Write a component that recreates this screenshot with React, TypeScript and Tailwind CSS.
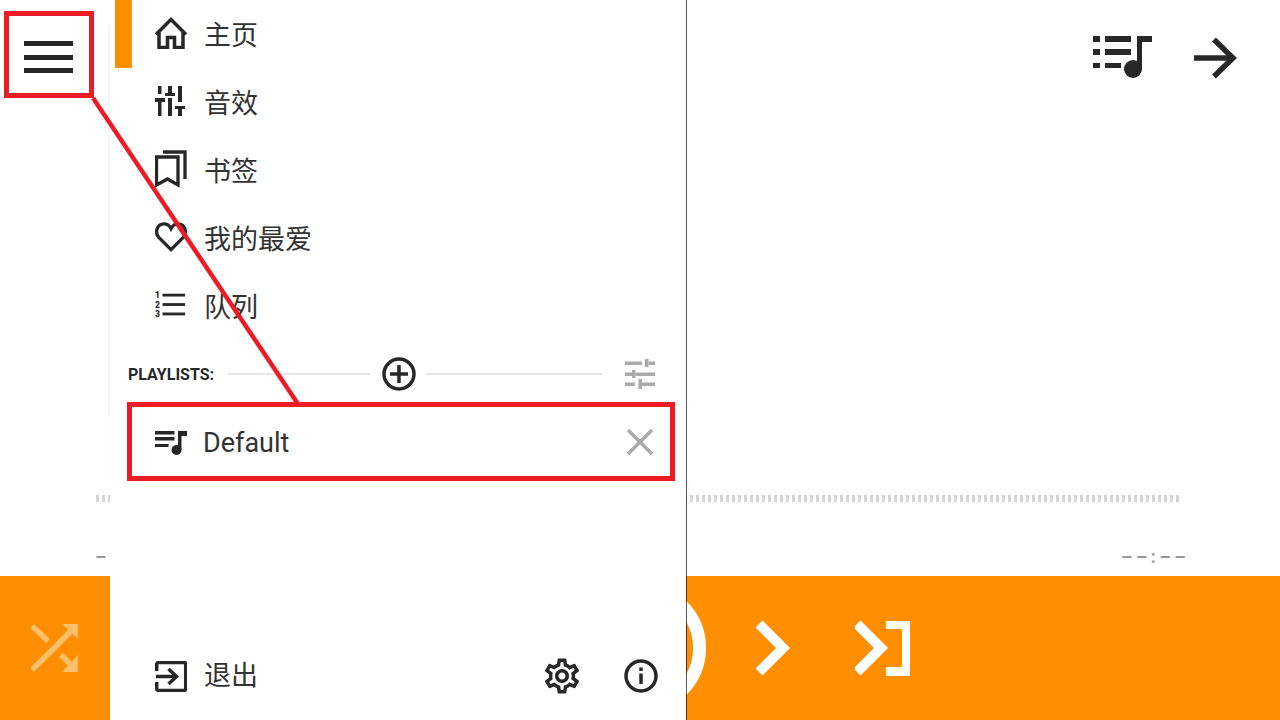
import React from 'react';
import { MdOutlineSettings } from 'react-icons/md';

const ink = '#272727';

function HomeIcon() {
  return (
    <svg width="32" height="32" viewBox="0 0 32 32" fill="none" stroke={ink} strokeWidth="3.500">
      <path d="M1 17.500 16 2.500l15 15" />
      <path d="M4 14v16.500h8.500V20.500h7V30.500H28V14" />
    </svg>
  );
}

function TuneIcon() {
  return (
    <svg width="32" height="32" viewBox="0 0 32 32" fill={ink}>
      <rect x="3" y="1" width="3.500" height="8" />
      <rect x="0" y="13" width="10" height="4" />
      <rect x="3" y="17" width="3.500" height="14" />
      <rect x="13" y="1" width="4" height="8" />
      <rect x="10" y="8" width="10" height="3" />
      <rect x="13" y="13" width="4" height="18" />
      <rect x="23" y="1" width="4" height="16" />
      <rect x="20" y="21" width="10" height="3" />
      <rect x="23" y="24" width="4" height="7" />
    </svg>
  );
}

function BookmarksIcon() {
  return (
    <svg width="32" height="38" viewBox="0 0 32 38" fill="none" stroke={ink} strokeWidth="3.300">
      <path d="M1.500 7H23V35l-10.500-6L1.500 35Z" />
      <path d="M8 2H30V29" />
    </svg>
  );
}

function HeartIcon() {
  return (
    <svg width="34" height="32" viewBox="0 0 34 32" fill="none" stroke={ink} strokeWidth="3.500">
      <path d="M17 29.500 4 16.500C-.5 11.500 2 2 9.500 2c4 0 6.200 2.300 7.500 5 1.300-2.700 3.500-5 7.500-5C32 2 34.500 11.500 30 16.500Z" />
    </svg>
  );
}

function QueueIcon() {
  return (
    <svg width="34" height="28" viewBox="0 0 34 28" fill={ink}>
      <rect x="8" y="2" width="24" height="3" />
      <rect x="8" y="12" width="24" height="3" />
      <rect x="8" y="22" width="24" height="3" />
      <text x="0" y="7" fontSize="9" fontWeight="900" fontFamily="Roboto">1</text>
      <text x="0" y="17" fontSize="9" fontWeight="900" fontFamily="Roboto">2</text>
      <text x="0" y="27" fontSize="9" fontWeight="900" fontFamily="Roboto">3</text>
    </svg>
  );
}

function PlusCircleIcon() {
  return (
    <svg width="34" height="34" viewBox="0 0 34 34" fill="none" stroke={ink} strokeWidth="3.500">
      <circle cx="17" cy="17" r="15" />
      <path d="M17 8v18M8 17h18" />
    </svg>
  );
}

function FilterIcon() {
  return (
    <svg width="30" height="30" viewBox="0 0 30 30" fill="#aaaaaa">
      <rect x="0" y="2.500" width="17" height="3.500" />
      <rect x="20" y="0" width="3.500" height="8" />
      <rect x="23.500" y="2.500" width="6.500" height="3.500" />
      <rect x="0" y="13.500" width="7" height="3.500" />
      <rect x="7" y="11" width="3.500" height="8" />
      <rect x="10.500" y="13.500" width="19.500" height="3.500" />
      <rect x="0" y="23.500" width="10" height="3.500" />
      <rect x="13.500" y="20" width="3.500" height="10" />
      <rect x="17" y="23.500" width="13" height="3.500" />
    </svg>
  );
}

function PlaylistIcon() {
  return (
    <svg width="33" height="25" viewBox="0 0 33 25" fill={ink}>
      <rect x="0" y="0" width="19.500" height="3.500" />
      <rect x="0" y="6" width="19.500" height="3.500" />
      <rect x="0" y="13" width="13.500" height="3" />
      <rect x="23" y="0" width="3.500" height="19" />
      <rect x="23" y="0" width="9" height="5" />
      <circle cx="21.500" cy="19" r="5" />
    </svg>
  );
}

function CloseIcon() {
  return (
    <svg width="26" height="26" viewBox="0 0 26 26" fill="none" stroke="#aaaaaa" strokeWidth="3.500">
      <path d="M1 1l24 24M25 1 1 25" />
    </svg>
  );
}

function ExitIcon() {
  return (
    <svg width="32" height="31" viewBox="0 0 32 31" fill="none" stroke={ink} strokeWidth="3.500">
      <path d="M1.700 10V3.500a2 2 0 0 1 2-2h25a2 2 0 0 1 2 2v24a2 2 0 0 1-2 2h-25a2 2 0 0 1-2-2V21" />
      <path d="M1 15.500h20" />
      <path d="M13.500 8 21.500 15.500 13.500 23" />
    </svg>
  );
}

function InfoIcon() {
  return (
    <svg width="34" height="34" viewBox="0 0 34 34" fill="none" stroke={ink} strokeWidth="3.500">
      <circle cx="17" cy="17" r="15" />
      <path d="M17 14.500V25" />
      <path d="M17 8.500v3.500" />
    </svg>
  );
}

function QueueMusicIcon() {
  return (
    <svg width="59" height="44" viewBox="0 0 59 44" fill={ink}>
      <rect x="0" y="0" width="7" height="6" />
      <rect x="0" y="13" width="7" height="6" />
      <rect x="0" y="27" width="7" height="5" />
      <rect x="12" y="0" width="26" height="6" />
      <rect x="12" y="13" width="26" height="6" />
      <rect x="12" y="27" width="16" height="5" />
      <rect x="44" y="0" width="5" height="33" />
      <rect x="44" y="0" width="15" height="6" />
      <circle cx="40" cy="33" r="9" />
    </svg>
  );
}

function ArrowIcon() {
  return (
    <svg width="44" height="42" viewBox="0 0 44 42" fill="none" stroke={ink} strokeWidth="5.500">
      <path d="M0 21h40" />
      <path d="M20 2.500 39 21 20 39.500" />
    </svg>
  );
}

function ShuffleIcon() {
  return (
    <svg width="48" height="50" viewBox="0 0 48 50" fill="#ffc06b" stroke="none">
      <path d="M2 47 45 4" stroke="#ffc06b" strokeWidth="5.500" />
      <path d="M2 3 18 18" stroke="#ffc06b" strokeWidth="5.500" />
      <path d="M31 32 45 46" stroke="#ffc06b" strokeWidth="5.500" />
      <path d="M32 1h16v15Z" />
      <path d="M32 49h16V32Z" />
    </svg>
  );
}

function Chevron({ flip }: { flip?: boolean }) {
  return (
    <svg width="34" height="56" viewBox="0 0 34 56" fill="none" stroke="#ffffff" strokeWidth="10" className={flip ? 'rotate-180' : ''}>
      <path d="M3 4l24 24L3 52" />
    </svg>
  );
}

function SkipIcon({ flip }: { flip?: boolean }) {
  return (
    <svg width="55" height="56" viewBox="0 0 55 56" fill="#ffffff" className={flip ? 'rotate-180' : ''}>
      <path d="M2 4l24 24L2 52" fill="none" stroke="#ffffff" strokeWidth="10" />
      <rect x="47" y="1" width="8" height="55" />
      <rect x="31" y="1" width="24" height="8" />
      <rect x="31" y="47" width="24" height="9" />
    </svg>
  );
}

const menu = [
  { label: '主页', icon: <HomeIcon />, active: true },
  { label: '音效', icon: <TuneIcon /> },
  { label: '书签', icon: <BookmarksIcon /> },
  { label: '我的最爱', icon: <HeartIcon /> },
  { label: '队列', icon: <QueueIcon /> },
];

function Drawer() {
  return (
    <aside className="absolute left-[110px] top-0 flex h-[720px] w-[577px] flex-col border-r border-black/65 bg-white bg-clip-padding">
      {menu.map((item) => (
        <div key={item.label} className="flex h-[68px] items-center pl-[5px]">
          <div className={item.active ? 'h-full w-[17px] bg-[#ff8f00]' : 'h-full w-[17px]'} />
          <div className="ml-[23px] flex w-[32px] justify-center pb-[2px]">{item.icon}</div>
          <span className="ml-[17px] pt-[4px] text-[27px] leading-none text-[#333333]">{item.label}</span>
        </div>
      ))}
      <div className="flex h-[68px] items-center pl-[18px]">
        <span className="w-[100px] pt-[2px] text-[16px] font-bold text-[#272727]">PLAYLISTS:</span>
        <div className="h-[2px] w-[142px] bg-[#e6e6e6]" />
        <div className="ml-[12px] mr-[10px]"><PlusCircleIcon /></div>
        <div className="h-[2px] w-[176px] bg-[#e6e6e6]" />
        <div className="ml-[23px]"><FilterIcon /></div>
      </div>
      <div className="flex h-[68px] items-center pl-[45px]">
        <div className="pt-[3px]"><PlaylistIcon /></div>
        <span className="ml-[15px] pt-[3px] text-[27px] leading-none text-[#333333]">Default</span>
        <div className="ml-auto mr-[33px]"><CloseIcon /></div>
      </div>
      <div className="mt-auto flex h-[88px] items-center pl-[45px]">
        <ExitIcon />
        <span className="ml-[17px] text-[27px] leading-none text-[#333333]">退出</span>
        <MdOutlineSettings className="ml-auto text-[42px] text-[#272727]" />
        <div className="ml-[41px] mr-[28px]"><InfoIcon /></div>
      </div>
    </aside>
  );
}

function Annotations() {
  return (
    <div className="pointer-events-none absolute inset-0">
      <div className="absolute left-[4px] top-[11px] h-[87px] w-[90px] border-[5px] border-[#ed1c24]" />
      <div className="absolute left-[127px] top-[402px] h-[79px] w-[548px] border-[5px] border-[#ed1c24]" />
      <svg className="absolute inset-0" width="1280" height="720">
        <line x1="93" y1="98" x2="298" y2="404" stroke="#ed1c24" strokeWidth="4.500" />
      </svg>
    </div>
  );
}

export default function App() {
  return (
    <div className="relative flex h-[720px] w-[1280px] flex-col overflow-hidden bg-white font-[family-name:Roboto,'Noto_Sans_CJK_SC',sans-serif]">
      <header className="flex h-[114px] items-center justify-between pl-[24px] pr-[42px]">
        <div className="flex w-[49px] flex-col gap-[8.500px]">
          <div className="h-[5px] bg-[#272727]" />
          <div className="h-[5px] bg-[#272727]" />
          <div className="h-[5px] bg-[#272727]" />
        </div>
        <div className="flex items-center gap-[42px] pt-[2px]">
          <QueueMusicIcon />
          <ArrowIcon />
        </div>
      </header>
      <div className="mt-[381px] ml-[96px] h-[7px] w-[1083px] bg-[repeating-linear-gradient(90deg,#d4d4d4_0,#d4d4d4_3px,transparent_3px,transparent_6px)]" />
      <div className="mt-[43px] flex justify-between pl-[95px] pr-[91px] text-[18px] font-bold leading-[24px] tracking-[3.500px] text-[#999999]">
        <span>––:––</span>
        <span>––:––</span>
      </div>
      <div className="mt-auto grid h-[144px] grid-cols-[1fr_auto_1fr] items-center bg-[#ff8f00]">
        <div className="pl-[30px]"><ShuffleIcon /></div>
        <div className="flex items-center">
          <SkipIcon flip />
          <div className="ml-[65px]"><Chevron flip /></div>
          <div className="mx-[50px] h-[132px] w-[132px] rounded-full border-[13px] border-white" />
          <Chevron />
          <div className="ml-[65px]"><SkipIcon /></div>
        </div>
        <div />
      </div>
      <div className="absolute left-[108px] top-[25px] h-[395px] w-[2px] bg-[#f7f7f7]" />
      <Drawer />
      <Annotations />
    </div>
  );
}
